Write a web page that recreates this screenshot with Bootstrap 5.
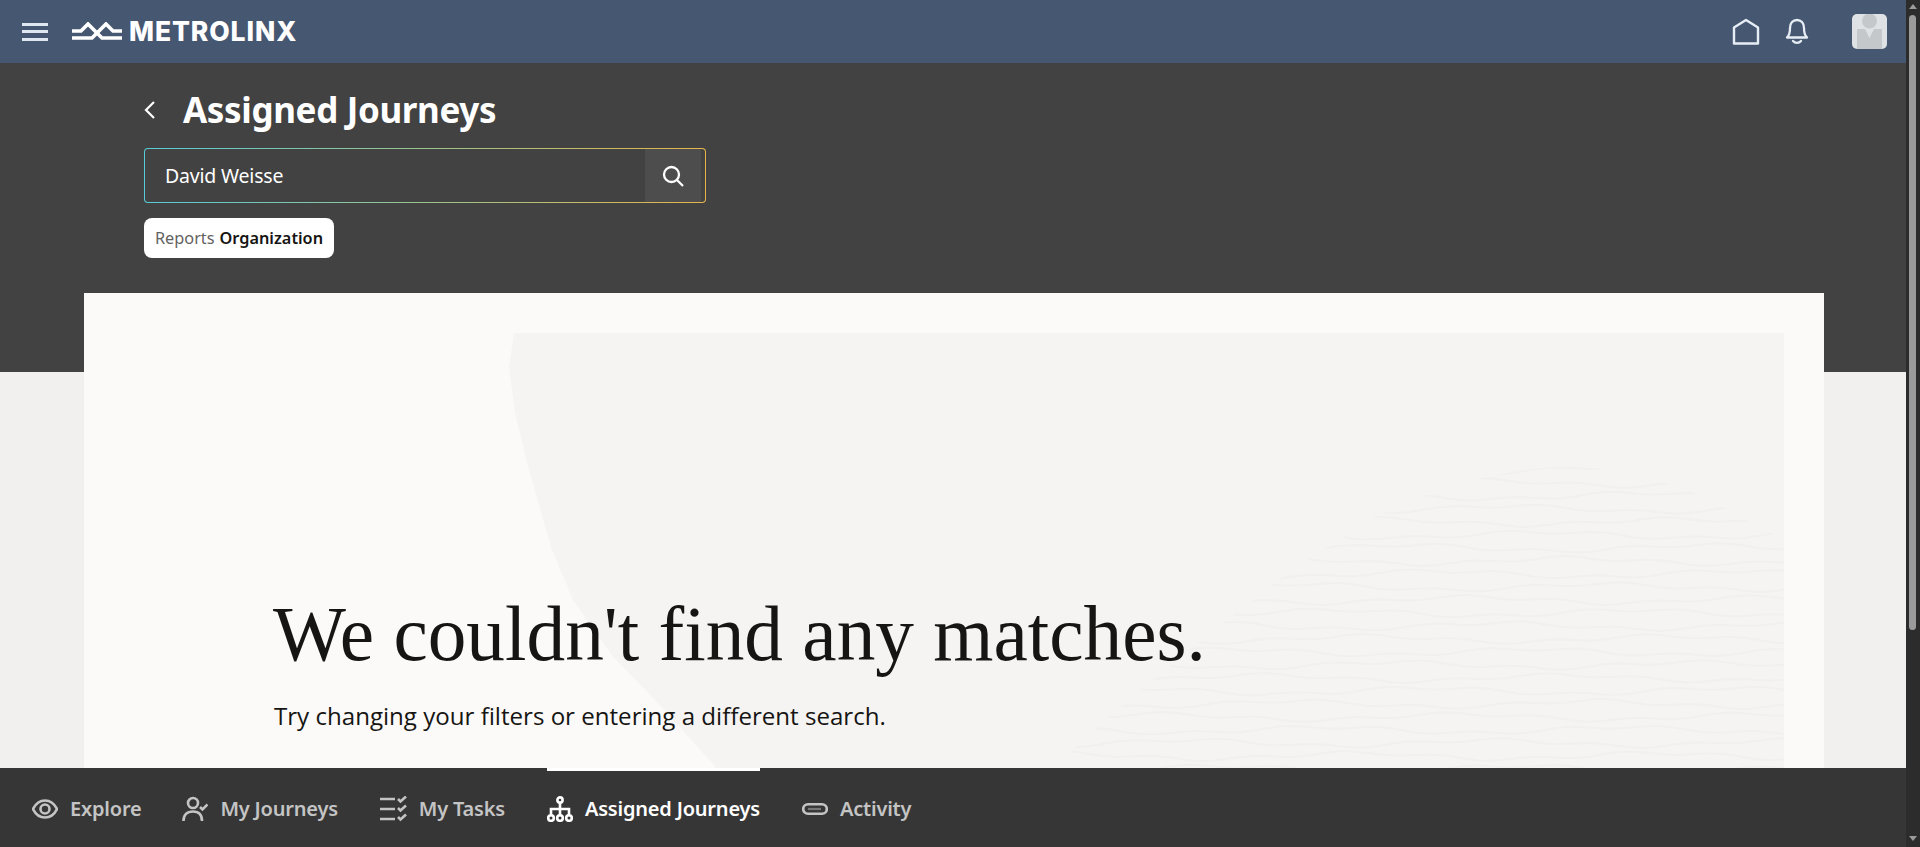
<!DOCTYPE html>
<html lang="en">

<head>
  <meta charset="UTF-8" />
  <meta name="viewport" content="width=device-width, initial-scale=1.0" />
  <title>Assigned Journeys</title>

  <link href="https://cdn.jsdelivr.net/npm/bootstrap@5.3.0/dist/css/bootstrap.min.css" rel="stylesheet">
  <style>
    html, body { height: 100%; overflow: hidden; }
    body { font-family: "Noto Sans", "Open Sans", sans-serif; background: #363636; }

    .app-shell { height: 847px; }
    .app-col { width: 1906px; }

    .scroll-rail { width: 14px; background: #2c2c2c; padding: 4px 3px; }
    .scroll-thumb { width: 7px; height: 615px; margin-top: 6px; border-radius: 4px; background: #9b9b9b; }
    .rail-arrow { width: 0; height: 0; border-left: 4px solid transparent; border-right: 4px solid transparent; }
    .rail-up { border-bottom: 5px solid #9b9b9b; }
    .rail-down { border-top: 5px solid #9b9b9b; margin-top: auto; margin-bottom: 2px; }

    .top-bar { flex: 0 0 63px; background: #465771; padding: 0 19px 0 22px; }
    .burger { width: 26px; height: 18px; flex-direction: column; justify-content: space-between; margin-right: 24px; }
    .burger span { display: block; height: 3px; background: #dfe7f0; }
    .brand-text { font-family: Inter, sans-serif; font-weight: 800; font-size: 26.5px; letter-spacing: .9px; line-height: 1; color: #fff; margin-left: 7px; }
    .bell-icon { margin-left: 25px; }
    .avatar-box { width: 35px; height: 35px; border-radius: 5px; margin-left: 43px; background: #dfe2e4; overflow: hidden; }

    .stage { flex: 1 1 0; min-height: 0; background: linear-gradient(#424242 309px, #f1f0ee 309px); overflow: hidden; }
    .stage-head { padding: 27px 0 0 144px; height: 230px; color: #fff; }
    .back-link { width: 39px; }
    .page-title { font-size: 35px; font-weight: 700; line-height: 40px; margin: 0; letter-spacing: -.35px; }
    .search-box { width: 562px; height: 55px; margin-top: 18px; border: 1px solid transparent; border-radius: 4px;
      background: linear-gradient(#424242, #424242) padding-box, linear-gradient(90deg, #58cbd6, #9cc48e 50%, #e6b54a) border-box; }
    .search-input { flex: 1; min-width: 0; padding-left: 20px; font-size: 19.5px; letter-spacing: -.2px; color: #fff; background: transparent; border: 0; outline: 0; }
    .search-btn { width: 56px; margin-right: 4px; background: #4d4d4d; border: 0; border-radius: 0; }
    .filter-chip { width: 190px; height: 40px; margin-top: 15px; border-radius: 8px; background: #fff; font-size: 16.3px; }
    .chip-muted { color: #62625f; }
    .chip-strong { color: #161513; font-weight: 600; margin-left: 5px; }

    .empty-panel { margin: 0 82px 0 84px; height: 520px; background: #fbfaf8; padding: 296px 0 0 189px; color: #161513; }
    .empty-art { top: 0; left: 0; width: 1740px; height: 520px; }
    .empty-title { font-family: "Liberation Serif", serif; font-size: 77.3px; line-height: 90px; font-weight: 400; margin: 0; }
    .empty-text { font-family: "Open Sans", sans-serif; font-size: 24.1px; line-height: 32px; margin: 21px 0 0 1px; }

    .tab-bar { flex: 0 0 79px; background: #363636; padding-left: 32px; gap: 42px; }
    .tab-link { height: 79px; gap: 12px; font-size: 20px; font-weight: 600; letter-spacing: -.2px; color: #c4c4c4; text-decoration: none; border-top: 3px solid transparent; margin-top: -1px; }
    .tab-link:first-child { margin-right: -1px; }
    .tab-link.is-active { color: #fff; border-top-color: #fff; }
  </style>
</head>

<body>
  <div class="app-shell d-flex">
    <div class="app-col d-flex flex-column">

      <header class="top-bar d-flex align-items-center">
        <div class="burger d-flex"><span></span><span></span><span></span></div>
        <svg width="50" height="20" viewBox="72 21 50 20" fill="none" stroke="#fff" stroke-width="3.6">
          <path d="M72 30H81L88 23L102 37H122" />
          <path d="M72 37H92L106 23L113 30H122" />
        </svg>
        <span class="brand-text">METROLINX</span>

        <svg class="ms-auto" width="28" height="27" viewBox="0 0 28 27" fill="none" stroke="#e6edf5" stroke-width="2.4">
          <path d="M2 25.5V9.5L14 2L26 9.5V25.5Z" stroke-linejoin="round" />
        </svg>
        <svg class="bell-icon" width="24" height="27" viewBox="0 0 24 27" fill="none" stroke="#e6edf5" stroke-width="2.3">
          <path d="M2 19.5C5 17 5 14 5 10C5 5 8 2 12 2S19 5 19 10C19 14 19 17 22 19.5Z" stroke-linejoin="round" />
          <path d="M8 23C10 25.5 14 25.5 16 23" stroke-linecap="round" />
        </svg>
        <div class="avatar-box">
          <svg width="35" height="35" viewBox="0 0 35 35">
            <circle cx="17.5" cy="7" r="7.5" fill="#c5c8ca" />
            <path d="M5 15H13L17.5 24L22 15H30V35H5Z" fill="#c5c8ca" />
          </svg>
        </div>
      </header>

      <main class="stage">
        <div class="stage-head">
          <div class="d-flex align-items-center">
            <div class="back-link d-flex">
              <svg width="12" height="20" viewBox="0 0 12 20" fill="none" stroke="#fff" stroke-width="2.2">
                <path d="M10 2L2 10L10 18" />
              </svg>
            </div>
            <h1 class="page-title">Assigned Journeys</h1>
          </div>
          <div class="search-box d-flex">
            <input class="search-input" type="text" value="David Weisse" aria-label="Search" />
            <button class="search-btn btn d-flex align-items-center justify-content-center" type="button" aria-label="Search">
              <svg width="24" height="24" viewBox="0 0 24 24" fill="none" stroke="#fff" stroke-width="2.3">
                <circle cx="10.5" cy="10.5" r="7.5" />
                <path d="M16 16L22 22" />
              </svg>
            </button>
          </div>
          <div class="filter-chip d-flex align-items-center justify-content-center">
            <span class="chip-muted">Reports</span><span class="chip-strong">Organization</span>
          </div>
        </div>

        <section class="empty-panel position-relative">
          <svg id="emptyArt" class="empty-art position-absolute" viewBox="84 293 1740 520" aria-hidden="true">
            <defs>
              <clipPath id="printClip">
                <path d="M1557 467C1620 465 1690 485 1733 513C1755 525 1770 532 1784 540V813H1030L1059 763L1105 720L1205 637L1282 577L1370 520C1430 488 1500 470 1557 467Z" />
              </clipPath>
            </defs>
            <path fill="#f5f4f2" d="M514 333H1784V813H745L712 763L658 703L613 657L573 600L551 547L529 470L515 413L509 367Z" />
            <g id="printLines" clip-path="url(#printClip)" fill="none" stroke="#f1f0ee" stroke-width="2"></g>
          </svg>
          <div class="position-relative">
            <h2 class="empty-title">We couldn't find any matches.</h2>
            <p class="empty-text">Try changing your filters or entering a different search.</p>
          </div>
        </section>
      </main>

      <nav class="tab-bar d-flex align-items-center">
        <a class="tab-link d-flex align-items-center" href="#">
          <svg width="26" height="26" viewBox="0 0 26 26" fill="none" stroke="#c4c4c4" stroke-width="2.6">
            <path d="M1 13C4 7 8 4.5 13 4.5S22 7 25 13C22 19 18 21.5 13 21.5S4 19 1 13Z" />
            <circle cx="13" cy="13" r="4.5" />
          </svg>
          Explore
        </a>
        <a class="tab-link d-flex align-items-center" href="#">
          <svg width="26" height="26" viewBox="0 0 26 26" fill="none" stroke="#c4c4c4" stroke-width="2.6">
            <circle cx="11" cy="7" r="5" />
            <path d="M1.5 25C1.5 19 5 15.5 11 15.5S20 19 20 25" />
            <path d="M18 11L20.5 13.5L25.5 8.5" />
          </svg>
          My Journeys
        </a>
        <a class="tab-link d-flex align-items-center" href="#">
          <svg width="27" height="26" viewBox="0 0 27 26" fill="none" stroke="#c4c4c4" stroke-width="2.6">
            <path d="M0 3H15M0 13H15M0 23H15" />
            <path d="M18 3L20.5 5.5L26 .5M18 12L20.5 14.5L26 9.5M18 21L20.5 23.5L26 18.5" />
          </svg>
          My Tasks
        </a>
        <a class="tab-link is-active d-flex align-items-center" href="#">
          <svg width="26" height="26" viewBox="0 0 26 26" fill="none" stroke="#fff" stroke-width="2.6">
            <circle cx="13" cy="4" r="2.6" />
            <path d="M13 7V19M4 19V13H22V19" />
            <circle cx="4" cy="22" r="2.8" />
            <circle cx="13" cy="22" r="2.8" />
            <circle cx="22" cy="22" r="2.8" />
          </svg>
          Assigned Journeys
        </a>
        <a class="tab-link d-flex align-items-center" href="#">
          <svg width="26" height="26" viewBox="0 0 26 26" fill="none">
            <rect x="1.2" y="8.2" width="23.6" height="9.6" rx="4.8" stroke="#c4c4c4" stroke-width="2.6" />
            <path d="M6 13H19" stroke="#777" stroke-width="2.2" />
          </svg>
          Activity
        </a>
      </nav>
    </div>

    <div class="scroll-rail d-flex flex-column">
      <div class="rail-arrow rail-up"></div>
      <div class="scroll-thumb"></div>
      <div class="rail-arrow rail-down"></div>
    </div>
  </div>

  <script>
    // faint wavy lines of the fingerprint in the empty state art
    const group = document.getElementById("printLines");
    let markup = "";
    for (let y = 470; y < 815; y += 13) {
      let d = "";
      for (let x = 1030; x <= 1790; x += 14) {
        const wave = Math.sin(x * 0.021 + y * 0.7) * 3.2 + Math.sin(x * 0.067 + y * 1.3) * 1.8;
        d += (d ? "L" : "M") + x + " " + (y + wave).toFixed(1);
      }
      markup += '<path d="' + d + '" />';
    }
    group.innerHTML = markup;
  </script>

  <script src="https://cdn.jsdelivr.net/npm/bootstrap@5.3.0/dist/js/bootstrap.bundle.min.js"></script>
</body>

</html>
